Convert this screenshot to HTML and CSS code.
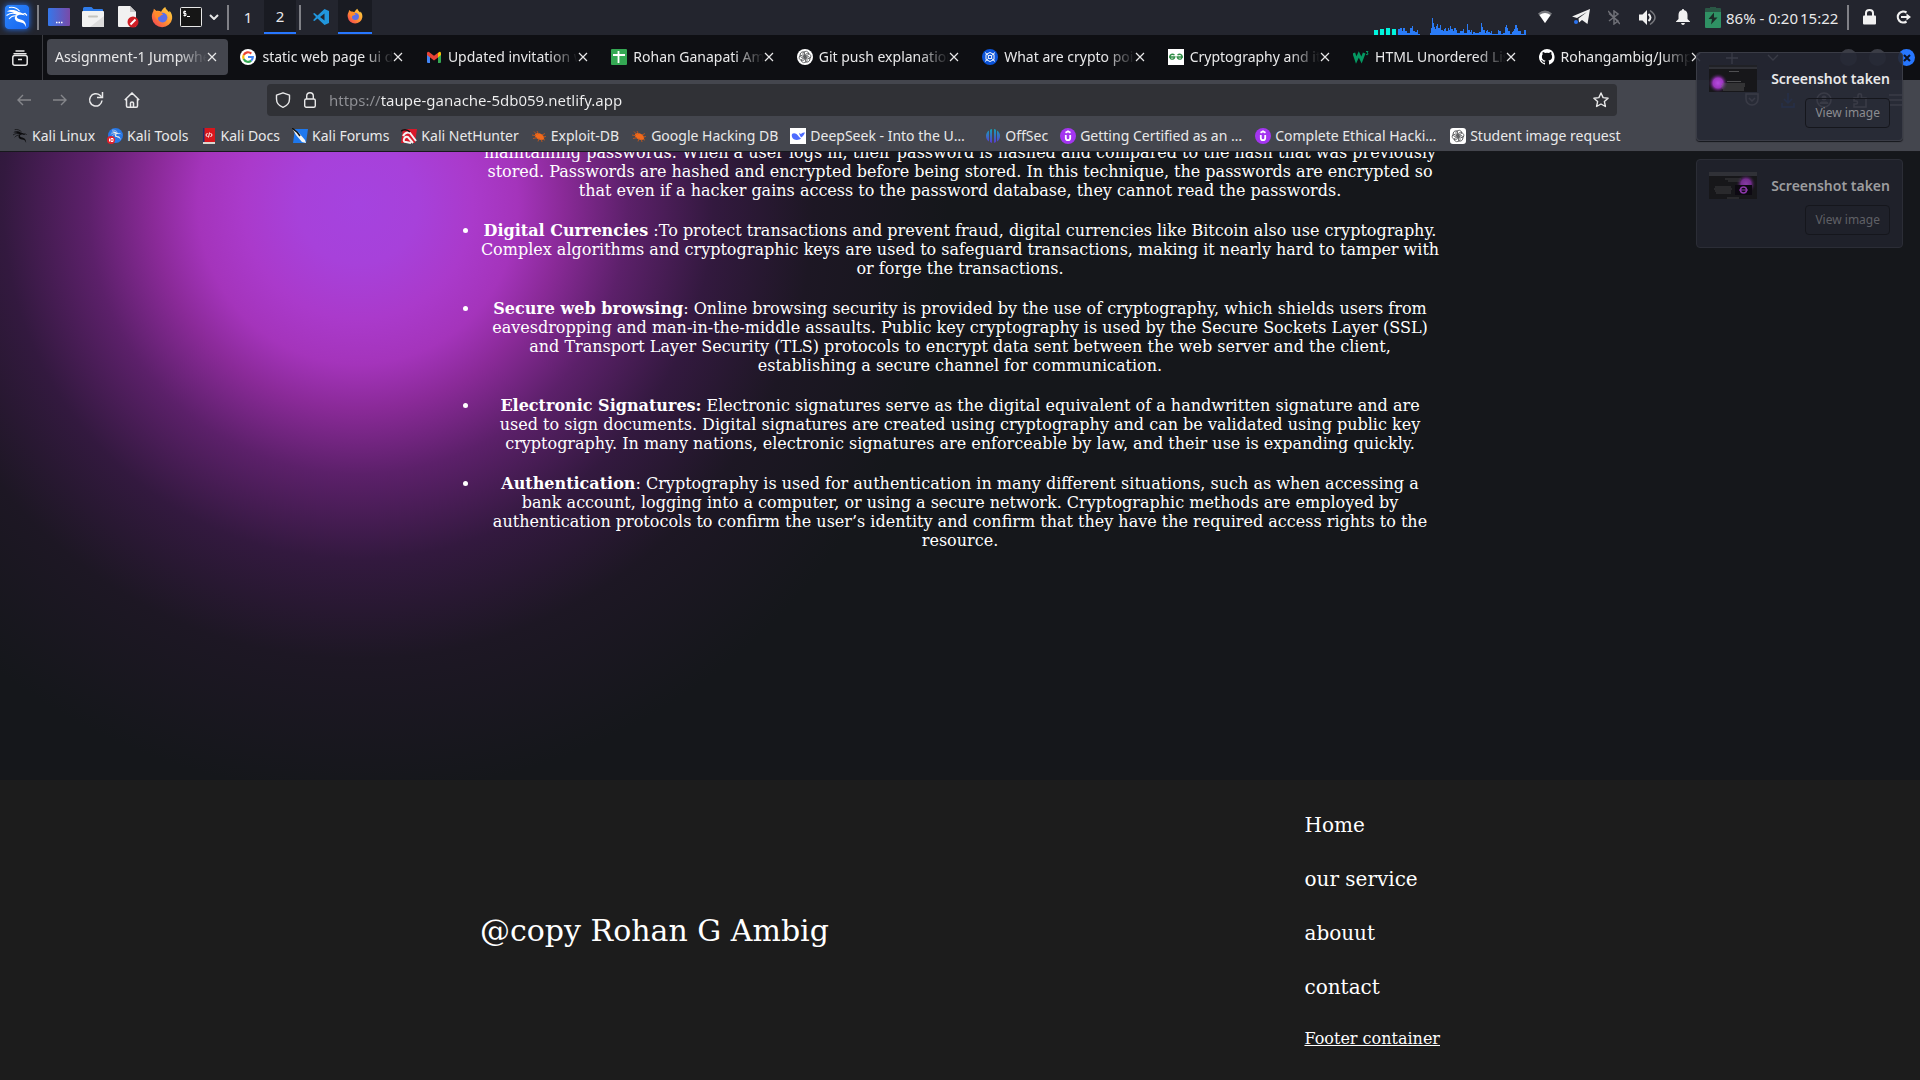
FILE: index.html
```html
<!DOCTYPE html>
<html lang="en">
<head>
<meta charset="utf-8">
<meta name="viewport" content="width=device-width, initial-scale=1">
<title>Assignment-1 Jumpwhere</title>
<link rel="stylesheet" href="styles.css">
</head>
<body>
<svg class="defs" width="0" height="0" aria-hidden="true">
  <defs>
    <linearGradient id="desk" x1="0" y1="0" x2="1" y2="0"><stop offset="0" stop-color="#3577ea"/><stop offset="1" stop-color="#7a4aa8"/></linearGradient>
    <linearGradient id="flame" x1="1" y1="0" x2="0" y2="1"><stop offset="0" stop-color="#ffde45"/><stop offset=".5" stop-color="#ff9330"/><stop offset="1" stop-color="#f2355a"/></linearGradient>
    <linearGradient id="off" x1="0" y1="0" x2="0" y2="1"><stop offset="0" stop-color="#15a3b8"/><stop offset="1" stop-color="#5a3ad0"/></linearGradient>
    <linearGradient id="kbg" x1="0" y1="0" x2="1" y2="1"><stop offset="0" stop-color="#2c86ff"/><stop offset="1" stop-color="#1765ee"/></linearGradient>
    <radialGradient id="glow"><stop offset="0" stop-color="#b74be0"/><stop offset=".5" stop-color="#9a35bd"/><stop offset="1" stop-color="#1a171e" stop-opacity="0"/></radialGradient>
    <symbol id="dragon" viewBox="0 0 24 24">
      <path d="M2 6.500C5 4.500 10 4.500 13.500 7c2 .2 4.500 1 6.500 3.500-2-.9-3.800-1-5.200-.7-2.500.5-3.800 1.700-2.300 3.400 1.500 1.500 4.500 1 6.200 2.500 1.700 1.500 2.500 3.800 2.500 6.800-1-3-2.400-4.300-4.200-4.800-2.500-.6-5.300-.6-6.600-2.600-1.300-2.200-.3-4.100 1.200-5.400C9 7.500 6 6.600 2 6.500z" fill="currentColor"/>
      <path d="M4 2.500c4-.8 8 .5 10.500 3.700M1.500 10.500C5 8 8.500 7.700 11.500 9M4 14c2-2.500 4.500-3.500 7-3.200M17 9.500l3-1 2 2" fill="none" stroke="currentColor" stroke-width="1.100"/>
    </symbol>
    <symbol id="firefox" viewBox="0 0 20 20">
      <path d="M13 1c.2 2 2.200 3.200 3.600 4.800l.2-1.500c2 2.200 2.700 4.600 2.400 7.200A9.200 9.200 0 0 1 1 11.500C.4 9 1 6.500 2.200 4.600L2.600 2.500 5 4.500c1.500-.4 3 0 4.200.8C10 4 11 2 13 1z" fill="url(#flame)"/>
      <circle cx="10.500" cy="10.500" r="4.400" fill="#5a6ee8"/>
      <path d="M3 6.500c2-1.500 4.500-1.500 6.300-.3L11 8c-1 .3-2.500.5-2.800 1.500-2 .3-2.500 2-1.800 3.500C4.500 12 3.500 9 3 6.500z" fill="#ff8a2a"/>
    </symbol>
    <symbol id="beetle" viewBox="0 0 16 16">
      <ellipse cx="8.500" cy="8.500" rx="5" ry="3" transform="rotate(24 8.500 8.500)" fill="#f26a1b"/>
      <path d="M1 7l4 .8M3 3.500l3 3M6 3l1.500 3M2 10.500l4-.8M7 13.500l1-3M11 14l-.6-2.500M12 9l3-.5M11 7l3-1.500M14 12l-2-.6" stroke="#b8541f" stroke-width="1" fill="none"/>
    </symbol>
    <symbol id="gpt" viewBox="0 0 16 16">
      <g fill="none" stroke="#3a3b3e" stroke-width=".7">
        <path id="petal" d="M8 2.500c2-.8 4 .8 3.800 2.800L8.200 7.400 6 6.100V4.300C6 3.400 6.900 2.700 8 2.500z"/>
        <use href="#petal" transform="rotate(60 8 8)"/><use href="#petal" transform="rotate(120 8 8)"/><use href="#petal" transform="rotate(180 8 8)"/><use href="#petal" transform="rotate(240 8 8)"/><use href="#petal" transform="rotate(300 8 8)"/>
      </g>
    </symbol>
    <symbol id="udemy" viewBox="0 0 16 16">
      <circle cx="8" cy="8" r="8" fill="#a435f0"/>
      <path d="M5.500 4.800L8 3.200l2.500 1.600M5.800 7v3c0 1.400.8 2.200 2.200 2.200s2.200-.8 2.200-2.200V7" fill="none" stroke="#fff" stroke-width="1.800"/>
    </symbol>
    <symbol id="x" viewBox="0 0 10 10"><path d="M1 1l8 8M9 1L1 9" stroke="currentColor" stroke-width="1.200" fill="none"/></symbol>
  </defs>
</svg>

<header class="panel">
  <button class="cell w34" aria-label="Applications"><svg class="kali" width="24" height="24" viewBox="0 0 24 24"><rect width="24" height="24" rx="3" fill="url(#kbg)"/><use href="#dragon" width="24" height="24"/></svg></button>
  <span class="sep"></span>
  <button class="cell w34" aria-label="Show desktop"><svg width="22" height="18" viewBox="0 0 22 18"><rect width="22" height="18" rx="1" fill="url(#desk)"/><path d="M8 14.500h1.500m1 0H12m1 0h1.500" stroke="#fff" stroke-width="1.500"/></svg></button>
  <button class="cell w34" aria-label="Files"><svg width="22" height="20" viewBox="0 0 22 20"><path d="M1 6V1.500Q1 0 2.500 0h7l2 2H20q1 0 1 1v5H1z" fill="#2f7be8"/><rect y="4" width="22" height="16" rx="1" fill="#f2f2f2"/><path d="M22 9v11H8z" fill="#dcdcdc"/><path d="M7 9.500h8" stroke="#c4c4bf" stroke-width="2" stroke-linecap="round"/></svg></button>
  <button class="cell w36" aria-label="Text editor"><svg width="21" height="22" viewBox="0 0 21 22"><path d="M0 1q0-1 1-1h11l6 6v15H1q-1 0-1-1z" fill="#f1f1f1"/><path d="M12 0l6 6h-6z" fill="#c9c9c9"/><circle cx="15" cy="16" r="5.500" fill="#d01f26"/><path d="M12.500 18.500l5-5" stroke="#fff" stroke-width="2"/></svg></button>
  <button class="cell w32" aria-label="Firefox"><svg width="22" height="22"><use href="#firefox"/></svg></button>
  <button class="cell w26" aria-label="Terminal"><svg width="22" height="20" viewBox="0 0 22 20"><rect x=".5" y=".5" width="21" height="19" rx="1" fill="#161616" stroke="#e8e8e8"/><path d="M6 4.500H3.700v2H6v2H3.500M4.800 3.500v6M7 9.500h3" stroke="#fff" fill="none"/></svg></button>
  <button class="cell w20" aria-label="More terminals"><svg width="10" height="6" viewBox="0 0 10 6"><path d="M1 1l4 4 4-4" fill="none" stroke="#e6e6e6" stroke-width="2"/></svg></button>
  <span class="sep"></span>
  <button class="cell w32 space">1</button>
  <button class="cell w32 space active">2</button>
  <span class="sep"></span>
  <button class="cell w34" aria-label="Code"><svg width="16" height="16" viewBox="0 0 16 16"><path d="M11.500 0L16 2v12l-4.500 2L4.500 9.500 1.500 12 0 11.200 3 8 0 4.800 1.500 4l3 2.500zM11.500 4.500L7 8l4.500 3.500z" fill="#2196dc" fill-rule="evenodd"/></svg></button>
  <button class="cell w34 active" aria-label="Firefox window"><svg width="16" height="16"><use href="#firefox"/></svg></button>

  <span class="spacer"></span>
  <svg class="graph" width="152" height="17" viewBox="0 0 152 17" aria-label="Network graph"><path d="M2 17V12M8 17V11M14 17V10M20 17V11" stroke="#00f5dd" stroke-width="4"/><path d="M24 17V11h2v-1h2v3h1v-3h2v3h2v2h3v-5h2v-2h1v5h2v1h2v-2h1v4h2v1h10v-2h1v-5h1V0h1v5h1v4h1v2h1v-3h1v-2h1v4h2v-3h1v5h2v1h1v-2h1v-1h1v3h2v-3h1v2h1v-4h1v3h2v2h1v-3h2v2h1v3h3v-2h3v-2h1v4h3v-9h1v6h2v2h1v-2h1v4h1v-2h2v1h4v-1h2v-9h1v4h1v3h2v3h1v-2h1v-1h1v2h2v1h1v-2h1v3h6v-4h1v1h2v3h2v-1h2v-6h1v-2h1v3h1v3h2v3h3v-3h1v4zM138 17v-3h2v-3h1v-4h2v3h1v3h3v3h3v-4h2v5z" fill="#2a7bf6"/></svg>
  <span class="cell w38"><svg width="14" height="14" viewBox="0 0 14 14"><path d="M0 3.500Q7-2.500 14 3.500L7 13z" fill="#77787d"/><path d="M1.500 5Q7 1 12.500 5L7 13z" fill="#fff"/></svg></span>
  <span class="cell w34"><svg width="18" height="16" viewBox="0 0 18 16"><path d="M0 7.500L18 0l-2.500 15L10 11l-3 2.500-.5-4L15 3 5 9z" fill="#f1f1f1"/><circle cx="4" cy="13" r="2" fill="#2b73ee"/></svg></span>
  <span class="cell w32"><svg width="12" height="15" viewBox="0 0 12 15"><path d="M1 3.500l9 7.500-4 3V1l4 3-9 7M0 1l12 13" fill="none" stroke="#6f7077" stroke-width="1.500"/></svg></span>
  <span class="cell w36"><svg width="18" height="17" viewBox="0 0 18 17"><path d="M0 5.500h3.500L8 1v15l-4.500-4.500H0z" fill="#f1f1f1"/><path d="M9.500 5q4 3.500 0 7" fill="none" stroke="#f1f1f1" stroke-width="2"/><path d="M11 1.500q10 7 0 14" fill="none" stroke="#77787d" stroke-width="1.500"/></svg></span>
  <span class="cell w34"><svg width="14" height="16" viewBox="0 0 14 16"><path d="M7 0q1 0 1.200 1.300Q11.500 2 11.500 6v4l2.500 2.500V13H0v-.5L2.500 10V6q0-4 3.300-4.700Q6 0 7 0zM5 14h4q-.5 2-2 2t-2-2z" fill="#f1f1f1"/></svg></span>
  <span class="cell w26"><svg width="16" height="21" viewBox="0 0 16 21"><path d="M5 0h6v1h4q1 0 1 1v4H0V2q0-1 1-1h4z" fill="#2a5745"/><path d="M0 5h16v15q0 1-1 1H1q-1 0-1-1z" fill="#2f9164"/><path d="M9 5.500L3.500 12H7l-1 5.500 6.500-7H9z" fill="#1c2a27"/></svg></span>
  <span class="power">86% - 0:20</span>
  <time class="clock">15:22</time>
  <span class="sep"></span>
  <button class="cell w34" aria-label="Lock"><svg width="13" height="16" viewBox="0 0 13 16"><rect y="6.500" width="13" height="9" rx="1" fill="#f1f1f1"/><path d="M3 7V4q0-3 3.500-3T10 4v3" fill="none" stroke="#f1f1f1" stroke-width="2"/></svg></button>
  <button class="cell w34" aria-label="Log out"><svg width="15" height="14" viewBox="0 0 15 14"><path d="M10.500 2.500A5.500 5.500 0 1 0 10.500 11.500" fill="none" stroke="#f1f1f1" stroke-width="2.200"/><path d="M5 6h5.500V3.500L15 7l-4.500 3.500V8H5z" fill="#f1f1f1"/></svg></button>
</header>

<nav class="tabs" aria-label="Tabs">
  <button class="view" aria-label="Recent browsing"><svg width="16" height="16" viewBox="0 0 16 16"><path d="M4 1h8M2 3.800h12" stroke="#e8e8e8" stroke-width="1.400" stroke-linecap="round"/><rect x=".8" y="5.500" width="14.400" height="9.700" rx="2" fill="none" stroke="#e8e8e8" stroke-width="1.500"/><path d="M6 9.500h4" stroke="#e8e8e8" stroke-width="1.500"/></svg></button>
  <div class="strip">
    <div class="tab on"><button class="label">Assignment-1 Jumpwhere</button><button class="close" aria-label="Close"><svg width="10" height="10"><use href="#x"/></svg></button></div>
    <div class="tab"><svg width="16" height="16" viewBox="0 0 16 16"><circle cx="8" cy="8" r="8" fill="#fff"/><g fill="none" stroke-width="2.200"><path d="M11.300 4.600A4.800 4.800 0 0 0 3.700 5.900" stroke="#ea4335"/><path d="M3.700 5.900a4.800 4.800 0 0 0 0 4.200" stroke="#fbbc05"/><path d="M3.700 10.100a4.800 4.800 0 0 0 7.500 1.500" stroke="#34a853"/><path d="M11.200 11.600A4.600 4.600 0 0 0 12.800 8H8" stroke="#4285f4"/></g></svg><button class="label">static web page ui design</button><button class="close" aria-label="Close"><svg width="10" height="10"><use href="#x"/></svg></button></div>
    <div class="tab"><svg width="16" height="16" viewBox="0 0 16 16"><path d="M1 4h3v10H2q-1 0-1-1z" fill="#4285f4"/><path d="M12 4h3v9q0 1-1 1h-2z" fill="#34a853"/><path d="M12 4l1-1q2-1 2 1.500V6l-3 2.500z" fill="#fbbc04"/><path d="M1 4.500Q1 2 3 3l5 3.800L12 3.800v4.700L8 11.500 1 6z" fill="#ea4335"/></svg><button class="label">Updated invitation with</button><button class="close" aria-label="Close"><svg width="10" height="10"><use href="#x"/></svg></button></div>
    <div class="tab"><svg width="16" height="16" viewBox="0 0 16 16"><rect width="16" height="16" rx="1" fill="#34a853"/><path d="M2 6h12M7.500 2v12" stroke="#fff" stroke-width="1.800"/></svg><button class="label">Rohan Ganapati Ambig</button><button class="close" aria-label="Close"><svg width="10" height="10"><use href="#x"/></svg></button></div>
    <div class="tab"><svg width="16" height="16" viewBox="0 0 16 16"><circle cx="8" cy="8" r="8" fill="#fff"/><use href="#gpt" width="16" height="16"/></svg><button class="label">Git push explanation</button><button class="close" aria-label="Close"><svg width="10" height="10"><use href="#x"/></svg></button></div>
    <div class="tab"><svg width="16" height="16" viewBox="0 0 16 16"><circle cx="8" cy="8" r="8" fill="#0b53d8"/><path d="M8 3.500l4 2v5l-4 2-4-2v-5zM3 3.500l10 9M13 3.500l-10 9" fill="none" stroke="#fff" stroke-width="1"/><circle cx="8" cy="8" r="1.800" fill="#0b53d8" stroke="#fff"/></svg><button class="label">What are crypto points</button><button class="close" aria-label="Close"><svg width="10" height="10"><use href="#x"/></svg></button></div>
    <div class="tab"><svg width="16" height="16" viewBox="0 0 16 16"><rect width="16" height="16" fill="#fff"/><path d="M6.500 6Q4.500 4.500 2.500 6q-1.500 2 .3 3.800Q6 11 6.800 8H1M9.500 6q2-1.500 4 0 1.500 2-.3 3.800Q10 11 9.200 8H15" fill="none" stroke="#2f8d46" stroke-width="1.300"/></svg><button class="label">Cryptography and its</button><button class="close" aria-label="Close"><svg width="10" height="10"><use href="#x"/></svg></button></div>
    <div class="tab"><svg width="16" height="16" viewBox="0 0 16 16"><path d="M.8 4l2.400 7 2.600-5.500L8.500 11l2.700-7" fill="none" stroke="#059862" stroke-width="2.800"/><path d="M13 2.500h2L14 4q1.500.2 1 1.300-.6.800-2 .2" fill="none" stroke="#059862"/></svg><button class="label">HTML Unordered Lists</button><button class="close" aria-label="Close"><svg width="10" height="10"><use href="#x"/></svg></button></div>
    <div class="tab"><svg width="16" height="16" viewBox="0 0 16 16"><path d="M8 0a8 8 0 0 0-2.500 15.600c.4 0 .5-.2.500-.4v-1.500c-2.200.5-2.700-1-2.700-1-.4-.9-.9-1.200-.9-1.200-.7-.5.100-.5.100-.5.800.1 1.200.8 1.200.8.700 1.300 1.900.9 2.300.7.100-.5.300-.9.500-1.100-1.800-.2-3.600-.9-3.600-4 0-.9.300-1.600.8-2.100-.1-.2-.4-1 .1-2.200 0 0 .7-.2 2.200.8a7.600 7.600 0 0 1 4 0c1.500-1 2.200-.8 2.200-.8.400 1.100.2 2 .1 2.100.5.600.8 1.300.8 2.200 0 3.100-1.900 3.700-3.700 3.900.3.300.6.800.6 1.500v2.200c0 .2.100.5.500.4A8 8 0 0 0 8 0z" fill="#fff"/></svg><button class="label">Rohangambig/Jumpwhere</button><button class="close" aria-label="Close"><svg width="10" height="10"><use href="#x"/></svg></button></div>
  </div>
  <div class="window">
    <button class="cell w36" aria-label="New tab"><svg width="12" height="12" viewBox="0 0 12 12"><path d="M6 0v12M0 6h12" stroke="#e8e8e8" stroke-width="1.300"/></svg></button>
    <button class="cell w46" aria-label="List all tabs"><svg width="12" height="8" viewBox="0 0 12 8"><path d="M1 1l5 5 5-5" fill="none" stroke="#e8e8e8" stroke-width="1.300"/></svg></button>
    <span class="spacer"></span>
    <button class="dot" aria-label="Minimize"></button>
    <button class="dot" aria-label="Maximize"></button>
    <button class="dot quit" aria-label="Close window"><svg width="8" height="8" viewBox="0 0 8 8"><path d="M1 1l6 6M7 1L1 7" stroke="#0c1222" stroke-width="2"/></svg></button>
  </div>
</nav>

<div class="toolbar">
  <div class="navbar">
    <div class="history">
      <button class="cell w36 faded" aria-label="Back"><svg width="14" height="12" viewBox="0 0 14 12"><path d="M14 6H1M6 1L1 6l5 5" fill="none" stroke="currentColor" stroke-width="1.400"/></svg></button>
      <button class="cell w36 faded" aria-label="Forward"><svg width="14" height="12" viewBox="0 0 14 12"><path d="M0 6h13M8 1l5 5-5 5" fill="none" stroke="currentColor" stroke-width="1.400"/></svg></button>
      <button class="cell w36" aria-label="Reload"><svg width="16" height="16" viewBox="0 0 16 16"><path d="M14 8.500A6.200 6.200 0 1 1 12 3.300l1.500 1.500" fill="none" stroke="currentColor" stroke-width="1.500"/><path d="M14.500 0v5.500H9" fill="none" stroke="currentColor" stroke-width="1.500"/></svg></button>
      <button class="cell w36" aria-label="Home"><svg width="16" height="16" viewBox="0 0 16 16"><path d="M.8 8L8 1l7.200 7M2.500 7v7q0 1.200 1.200 1.200h8.600q1.200 0 1.200-1.200V7M6.500 15v-4q0-1 1.500-1t1.500 1v4" fill="none" stroke="currentColor" stroke-width="1.500"/></svg></button>
    </div>
    <div class="address">
      <svg width="16" height="16" viewBox="0 0 16 16"><path d="M8 .8l6.500 2.300V7c0 4-3 7-6.500 8.300C4.500 14 1.500 11 1.500 7V3.100z" fill="none" stroke="currentColor" stroke-width="1.400" stroke-linejoin="round"/></svg>
      <svg width="12" height="16" viewBox="0 0 12 16"><rect x=".7" y="7" width="10.600" height="8.300" rx="1.500" fill="none" stroke="currentColor" stroke-width="1.400"/><path d="M2.700 7V4Q2.700.8 6 .8T9.300 4v3" fill="none" stroke="currentColor" stroke-width="1.400"/></svg>
      <input class="url" type="text" aria-label="Address" value="https://taupe-ganache-5db059.netlify.app">
      <button class="star" aria-label="Bookmark this page"><svg width="16" height="16" viewBox="0 0 16 16"><path d="M8 1l2.100 4.600 5 .6-3.700 3.400 1 4.900L8 12l-4.400 2.500 1-4.900L.9 6.200l5-.6z" fill="none" stroke="currentColor" stroke-width="1.400" stroke-linejoin="round"/></svg></button>
    </div>
    <div class="tools">
      <button class="cell w36" aria-label="Pocket"><svg width="14" height="14" viewBox="0 0 14 14"><path d="M1 1h12v5a6 6 0 0 1-12 0zM4 5l3 3 3-3" fill="none" stroke="currentColor" stroke-width="1.500"/></svg></button>
      <button class="cell w36 download" aria-label="Downloads"><svg width="14" height="15" viewBox="0 0 14 15"><path d="M7 0v10M3 6l4 4 4-4M1 10v4h12v-4" fill="none" stroke="currentColor" stroke-width="1.500"/></svg></button>
      <button class="cell w36" aria-label="Account"><svg width="16" height="16" viewBox="0 0 16 16"><circle cx="8" cy="8" r="7" fill="none" stroke="currentColor" stroke-width="1.500"/><circle cx="8" cy="6" r="2.500" fill="currentColor"/><path d="M3.500 12q0-2.500 2-2.500h5q2 0 2 2.500" fill="currentColor"/></svg></button>
      <button class="cell w36" aria-label="Extensions"><svg width="15" height="15" viewBox="0 0 15 15"><path d="M1 5h4V2.500a1.500 1.500 0 0 1 3.500 0V5H13v9H1v-3h2a1.500 1.500 0 0 0 0-3H1z" fill="none" stroke="currentColor" stroke-width="1.500"/></svg></button>
      <button class="cell w36" aria-label="Menu"><svg width="14" height="12" viewBox="0 0 14 12"><path d="M0 1h14M0 6h14M0 11h14" stroke="currentColor" stroke-width="1.400"/></svg></button>
    </div>
  </div>
  <nav class="bookmarks" aria-label="Bookmarks">
    <a href="#"><svg class="ink" width="16" height="16"><use href="#dragon"/></svg>Kali Linux</a>
    <a href="#"><svg width="16" height="16" viewBox="0 0 16 16"><circle cx="8.500" cy="7.500" r="7.500" fill="#2777e6"/><use href="#dragon" x="3" y="1" width="12" height="12"/><circle cx="4" cy="12" r="4" fill="#e0202c"/><path d="M2.500 10.500v3M4 10.500h2v3H4z" stroke="#fff" fill="none"/></svg>Kali Tools</a>
    <a href="#"><svg width="16" height="16" viewBox="0 0 16 16"><path d="M2 0h12v16H2z" fill="#d8161c"/><path d="M2 0h1.500v14H2z" fill="#1e2c6b"/><path d="M2 14h12v2H2z" fill="#d9d6cf"/><path d="M6.500 5L4.800 7l1.700 2M9.500 5l1.700 2-1.700 2M8.500 4.500l-1 5" stroke="#fff" fill="none"/></svg>Kali Docs</a>
    <a href="#"><svg width="16" height="16" viewBox="0 0 16 16"><path d="M3 1h13l-2 14H1z" fill="#1e78ee"/><path d="M0 0l7 5 6 7 1 3-4-1-6-7z" fill="#f3f3f3"/><path d="M0 0l6 5M5 4l3 4" stroke="#111" stroke-width="1.500"/></svg>Kali Forums</a>
    <a href="#"><svg width="16" height="16" viewBox="0 0 16 16"><path d="M2 1h14l-2 14H0z" fill="#d8182a"/><path d="M2 8q3-5 7-3l6 8M12 15l-5-6q-3-1-4 2t2 3l5 1" fill="none" stroke="#f3f3f3" stroke-width="2"/><path d="M0 3q5-3 9 1" stroke="#111" stroke-width="1.500" fill="none"/></svg>Kali NetHunter</a>
    <a href="#"><svg width="16" height="16"><use href="#beetle"/></svg>Exploit-DB</a>
    <a href="#"><svg width="16" height="16"><use href="#beetle"/></svg>Google Hacking DB</a>
    <a class="long" href="#"><svg width="16" height="16" viewBox="0 0 16 16"><rect width="16" height="16" fill="#fff"/><path d="M2 6c1-1 3-1 4.500 0C8 7 9 9.500 11 10.500c-3 2.500-8 1.500-9-1.500-.4-1-.3-2 0-3zM9 5l2 1q1-2 4-1.500Q14 7 12.500 8.500l-1.500 1Q9.500 7.500 9 5z" fill="#4d6bfe"/></svg><span>DeepSeek - Into the Unknown</span></a>
    <a href="#"><svg width="16" height="16" viewBox="0 0 16 16"><path d="M7 1v14l-2-1V1.800zM9 1v14l2-1V1.800zM4 2.500v11Q1 11.500 1 8t3-5.500zM12 2.500v11q3-2 3-5.500t-3-5.500z" fill="url(#off)"/></svg>OffSec</a>
    <a class="long" href="#"><svg width="16" height="16"><use href="#udemy"/></svg><span>Getting Certified as an Ethical Hacker</span></a>
    <a class="long" href="#"><svg width="16" height="16"><use href="#udemy"/></svg><span>Complete Ethical Hacking Bootcamp</span></a>
    <a href="#"><svg width="16" height="16" viewBox="0 0 16 16"><rect width="16" height="16" rx="3" fill="#fff"/><use href="#gpt" width="16" height="16"/></svg>Student image request</a>
  </nav>
</div>

<main class="content">
  <ul class="uses">
    <li class="cont">maintaining passwords. When a user logs in, their password is hashed and compared to the hash that was previously stored. Passwords are hashed and encrypted before being stored. In this technique, the passwords are encrypted so that even if a hacker gains access to the password database, they cannot read the passwords.</li>
    <li><strong>Digital Currencies</strong> :To protect transactions and prevent fraud, digital currencies like Bitcoin also use cryptography. Complex algorithms and cryptographic keys are used to safeguard transactions, making it nearly hard to tamper with or forge the transactions.</li>
    <li><strong>Secure web browsing</strong>: Online browsing security is provided by the use of cryptography, which shields users from eavesdropping and man-in-the-middle assaults. Public key cryptography is used by the Secure Sockets Layer (SSL) and Transport Layer Security (TLS) protocols to encrypt data sent between the web server and the client, establishing a secure channel for communication.</li>
    <li><strong>Electronic Signatures:</strong> Electronic signatures serve as the digital equivalent of a handwritten signature and are used to sign documents. Digital signatures are created using cryptography and can be validated using public key cryptography. In many nations, electronic signatures are enforceable by law, and their use is expanding quickly.</li>
    <li><strong>Authentication</strong>: Cryptography is used for authentication in many different situations, such as when accessing a bank account, logging into a computer, or using a secure network. Cryptographic methods are employed by authentication protocols to confirm the user’s identity and confirm that they have the required access rights to the resource.</li>
  </ul>
</main>

<footer class="footer">
  <p class="copy">@copy Rohan G Ambig</p>
  <nav class="links" aria-label="Footer">
    <a href="#">Home</a>
    <a href="#">our service</a>
    <a href="#">abouut</a>
    <a href="#">contact</a>
    <a class="small" href="#">Footer container</a>
  </nav>
</footer>

<aside class="notes" aria-label="Notifications">
  <section class="note">
    <svg width="48" height="27" viewBox="0 0 48 27"><rect width="48" height="27" fill="#17171a"/><path d="M0 0h48v4H0z" fill="#303137"/><path d="M0 1h48" stroke="#111216"/><circle cx="9" cy="18" r="10" fill="url(#glow)"/><path d="M20 6.500h10M18 16.500h14M13 19h23M12 21h24M13 23h22M14 25h21" stroke="#67676c" stroke-width=".7"/></svg>
    <h2>Screenshot taken</h2>
    <button>View image</button>
  </section>
  <section class="note old">
    <svg width="48" height="27" viewBox="0 0 48 27"><rect width="48" height="27" fill="#17171a"/><path d="M0 0h48v4H0z" fill="#303137"/><circle cx="37" cy="12" r="10" fill="url(#glow)" opacity=".7"/><rect x="26" y="13" width="17" height="10" fill="#0d0912"/><circle cx="34.500" cy="18" r="3" fill="none" stroke="#8d38ab" stroke-width="1.500"/><path d="M30 18h9" stroke="#8d38ab"/><path d="M16 7h16M19 9h12M6 15h16M5 17h18M6 19h16M7 21h15M18 26h12" stroke="#4a4a50" stroke-width=".7"/></svg>
    <h2>Screenshot taken</h2>
    <button>View image</button>
  </section>
</aside>
</body>
</html>
```
FILE: styles.css
```css
* {
  box-sizing: border-box;
}

body {
  margin: 0;
  min-height: 100vh;
  display: flex;
  flex-direction: column;
  background: #15171b;
  color: #fff;
  font: 16px/19px "DejaVu Serif", serif;
  overflow: hidden;
}

.defs {
  position: absolute;
}

button,
input {
  margin: 0;
  padding: 0;
  border: 0;
  background: none;
  color: inherit;
  font: inherit;
}

svg {
  display: block;
  flex: none;
}

a {
  color: inherit;
  text-decoration: none;
}

.panel,
.tabs,
.toolbar,
.notes {
  font: 14px/20px "Noto Sans", sans-serif;
  color: #e9e9ea;
  white-space: nowrap;
}

.cell {
  display: flex;
  flex: none;
  align-items: center;
  justify-content: center;
  align-self: stretch;
}

.w20 { width: 20px; }
.w26 { width: 26px; }
.w32 { width: 32px; }
.w34 { width: 34px; }
.w36 { width: 36px; }
.w38 { width: 38px; }
.w46 { width: 46px; }

.spacer {
  flex: 1;
}

/* Desktop panel */
.panel {
  display: flex;
  align-items: center;
  height: 35px;
  flex: none;
  background: #23252e;
}

.panel .cell {
  height: 34px;
}

.kali {
  color: #fff;
  border-radius: 3px;
  box-shadow: 0 0 6px #2777ff;
}

.sep {
  flex: none;
  width: 2px;
  height: 25px;
  margin: 0 3px;
  background: #808187;
}

.space {
  font-size: 15px;
}

.panel .active {
  background: #191b22;
  border-bottom: 2px solid #2777ff;
}

.graph {
  align-self: flex-end;
}

.power {
  width: 74px;
  font-size: 15px;
}

.clock {
  width: 44px;
  font-size: 15px;
}

/* Browser tabs */
.tabs {
  display: flex;
  flex: none;
  height: 45px;
  background: #0e0f13;
}

.view {
  width: 43px;
  padding-left: 12px;
  border-right: 1px solid #3a3b40;
}

.strip {
  display: flex;
  flex: 1;
  min-width: 0;
  padding: 4px 0 5px 2px;
}

.tab {
  display: flex;
  flex: 1 1 0;
  min-width: 0;
  align-items: center;
  gap: 6px;
  margin: 0 2px;
  padding: 0 11px 0 8px;
  border-radius: 4px;
}

.tab.on {
  background: #44464e;
}

.label {
  flex: 1;
  min-width: 0;
  overflow: hidden;
  text-align: left;
  mask-image: linear-gradient(to left, transparent, #000 30px);
}

.close {
  margin-left: -6px;
}

.window {
  display: flex;
  align-items: center;
  width: 206px;
  padding-right: 5px;
}

.dot {
  display: flex;
  align-items: center;
  justify-content: center;
  width: 17px;
  height: 17px;
  margin-left: 12px;
  border-radius: 50%;
  background: #3b3d46;
}

.dot.quit {
  background: #2777ff;
}

/* Address bar and bookmarks */
.toolbar {
  flex: none;
  height: 72px;
  background: #44464e;
  border-bottom: 1px solid #17181c;
}

.navbar {
  display: flex;
  align-items: center;
  height: 40px;
}

.history {
  display: flex;
  width: 267px;
  padding-left: 6px;
}

.faded {
  color: #85868b;
}

.address {
  display: flex;
  flex: 1;
  align-items: center;
  gap: 13px;
  height: 32px;
  padding: 0 8px;
  border-radius: 4px;
  background: #303136;
}

.url {
  flex: 1;
  min-width: 0;
  outline: 0;
  font-size: 15px;
  background: linear-gradient(to right, #909196 52px, #f0f0f1 52px);
  background-clip: text;
  -webkit-text-fill-color: transparent;
}

.tools {
  display: flex;
  width: 303px;
  padding-left: 117px;
}

.download {
  color: #2777ff;
}

.bookmarks {
  display: flex;
  align-items: center;
  gap: 12px;
  height: 31px;
  padding: 0 12px;
}

.bookmarks a {
  display: flex;
  flex: none;
  align-items: center;
  gap: 4px;
}

.bookmarks .long {
  width: 183px;
}

.long span {
  overflow: hidden;
  text-overflow: ellipsis;
}

.ink {
  color: #0c0c0e;
}

/* Page */
.content {
  flex: 1;
  overflow: hidden;
  padding: 0 25%;
  background:
    radial-gradient(circle at 358px 52px, #a543df 0, #a741da 60px, #aa3acb 115px, #a434bb 160px, #8a2a98 205px, #5c206a 270px, #33193f 355px, #1d1724 455px, #15171b 590px);
}

.uses {
  margin: -9px 0 0;
  padding: 0;
  text-align: center;
}

.uses li {
  margin-bottom: 21px;
}

/* The scrolled-off item keeps its marker above the fold */
.uses .cont {
  list-style: none;
}

.footer {
  display: flex;
  align-items: center;
  justify-content: space-between;
  padding: 33px 25% 32px;
  background: #1c1c1c;
}

.copy {
  margin: 0;
  font-size: 30px;
  line-height: 36px;
}

.links {
  display: flex;
  flex-direction: column;
  gap: 30px;
  font-size: 20px;
  line-height: 24px;
}

.links .small {
  font-size: 16px;
  line-height: 19px;
  text-decoration: underline;
}

/* Notifications float over the browser */
.notes {
  position: absolute;
  top: 52px;
  right: 17px;
  width: 207px;
}

.note {
  display: grid;
  grid-template-columns: auto 1fr;
  gap: 6px 14px;
  margin-bottom: 18px;
  padding: 12px;
  border: 1px solid #3a3c46;
  border-radius: 4px;
  background: rgba(38, 40, 52, 0.9);
  box-shadow: 0 1px 1px #15161b;
}

.note h2 {
  margin: 4px 0 0;
  font-size: 14px;
  line-height: 20px;
  font-weight: 600;
  text-align: right;
}

.note button {
  grid-column: 2;
  justify-self: end;
  height: 30px;
  padding: 0 9px;
  border: 1px solid #15161c;
  border-radius: 4px;
  color: #8b8c91;
  font-size: 12px;
}

.note.old {
  border-color: #2b2d36;
  background: #1f212a;
  box-shadow: none;
}

.old h2 {
  color: #9c9d9f;
}

.old button {
  color: #5f6066;
}
```
